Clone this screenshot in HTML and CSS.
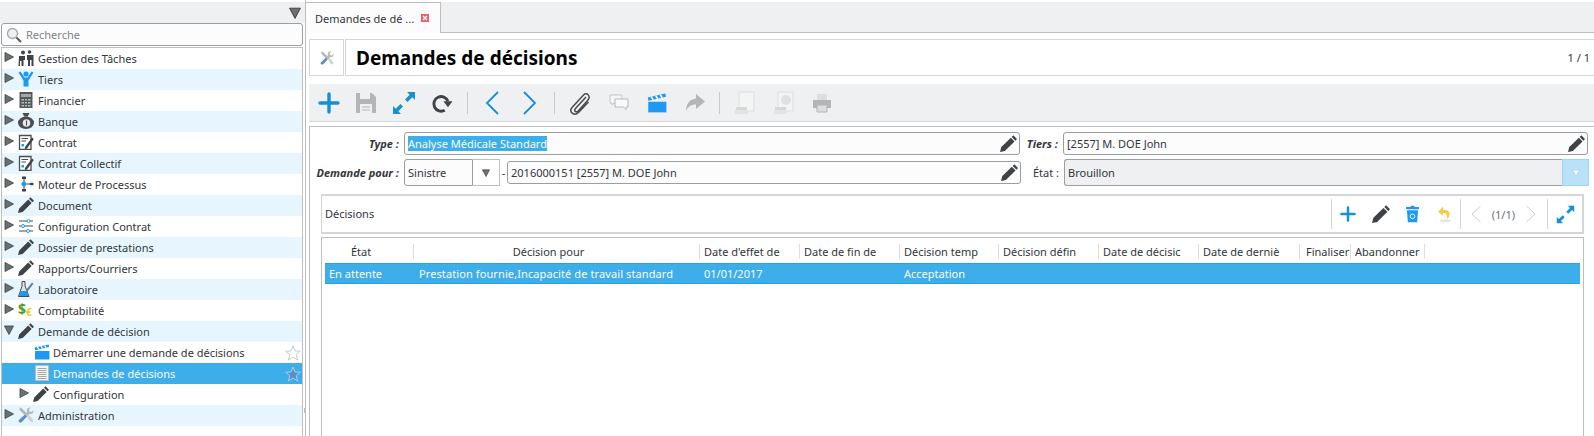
FILE: index.html
```html
<!DOCTYPE html>
<html lang="fr">
<head>
    <meta charset="UTF-8">
    <title>Demandes de décisions</title>
    <link rel="stylesheet" href="styles.css">
</head>
<body>

    <svg class="sprite" width="0" height="0">
        <symbol id="i-right" viewBox="0 0 10 10"><path d="M1 .5 9.500 5 1 9.500z" fill="#6b7073" stroke="#3b4045" stroke-width=".8"/></symbol>
        <symbol id="i-down" viewBox="0 0 10 10"><path d="M.5 1 9.500 1 5 9.500z" fill="#6b7073" stroke="#3b4045" stroke-width=".8"/></symbol>
        <symbol id="i-pencil" viewBox="0 0 16 16"><path d="M12.500 .3 16 3.800 14.500 5.300 11 1.800zM10.200 2.600 13.700 6.100 4.600 15 0 16 1.200 11.400z" fill="#3f4347"/></symbol>
        <symbol id="i-tools" viewBox="0 0 16 16"><path d="M1.500 .5 3.500 1 9 6.500 7 8.500 1.500 3z" fill="#b4b7ba"/><path d="M8.500 8.500 10 7 15 12.500 15 15 12.500 15z" fill="#d0d2d4"/><path d="M7 7.500 9 9.500 3.800 15C2.800 16 1 15.500 .8 14.500 .5 13.500 .8 13 1.500 12.500z" fill="#5b8fc4"/><path d="M15.500 3 13.500 5 11.500 4.500 11 2.500 13 .5C10.500 0 8 2 9 5L7 7.500 9 9.500 11 7C14 8 16 5.500 15.500 3z" fill="#b4bac0"/></symbol>
        <symbol id="i-clapper" viewBox="0 0 16 16"><path d="M1 7H15.500V15.500H1z" fill="#1d99f3"/><path d="M.6 3.600 14.600 .4 15.200 3 1.200 6.200z" fill="#1d99f3"/><path d="M3.400 3 5 5.400M7 2.200 8.600 4.600M10.600 1.400 12.200 3.800" stroke="#fff" stroke-width="1.200"/></symbol>
        <symbol id="i-doc" viewBox="0 0 16 16"><path d="M1.500 .5H14.500V15.500H1.500z" fill="#f4f5f5" stroke="#b8bbbd"/><path d="M3.500 3.500H12.500M3.500 5.500H12.500M3.500 7.500H12.500M3.500 9.500H12.500M3.500 11.500H12.500M3.500 13.500H12.500" stroke="#a5a8aa"/></symbol>
        <symbol id="i-star" viewBox="0 0 16 16"><path d="M8 1 10 6 15.300 6.200 11.200 9.600 12.600 15 8 12 3.400 15 4.800 9.600 .7 6.200 6 6z" fill="none" stroke="#c8cacc"/></symbol>
        <symbol id="i-star-on" viewBox="0 0 16 16"><path d="M8 1 10 6 15.300 6.200 11.200 9.600 12.600 15 8 12 3.400 15 4.800 9.600 .7 6.200 6 6z" fill="#5b8fc4" stroke="#a9d2ee"/></symbol>
        <symbol id="i-plus" viewBox="0 0 22 22"><path d="M11 2V20M2 11H20" stroke="#1590d5" stroke-width="3.400" stroke-linecap="round"/></symbol>
        <symbol id="i-expand" viewBox="0 0 24 24"><path d="M15 1H23V9L20.300 6.300 15.500 11 13 8.500 17.700 3.700zM1 23V15L3.700 17.700 8.500 13 11 15.500 6.300 20.300 9 23z" fill="#1590d5"/></symbol>
        <symbol id="i-contract" viewBox="0 0 16 16"><path d="M1.500 1.500H13V15.500H1.500z" fill="#fff" stroke="#4a4d50" stroke-width="1.300"/><path d="M3.500 4.500H10M3.500 7H8" stroke="#4a4d50"/><path d="M3.500 10H6V12.500H3.500z" fill="#1d99f3"/><path d="M7 13 14 3.500 15.800 5 9 14.500 6.800 15z" fill="#3f4347"/></symbol>
    </svg>

    <div class="sidebar">
        <div class="side-top"><svg class="side-arrow"><use href="#i-down"/></svg></div>
        <div class="search">
            <svg class="search-ico" viewBox="0 0 16 16"><circle cx="6.500" cy="6.500" r="5" fill="#eef1f3" stroke="#a4a8ab" stroke-width="1.300"/><path d="M10.500 10.500 15 15" stroke="#55595c" stroke-width="2"/></svg>
            <span>Recherche</span>
        </div>
        <div class="tree">
            <div class="row">
                <svg class="arrow"><use href="#i-right"/></svg>
                <svg class="ico" viewBox="0 0 16 16"><circle cx="5" cy="2.500" r="2" fill="#3f4347"/><circle cx="11.500" cy="2" r="1.800" fill="#3f4347"/><path d="M1 6H7V10H5.500V16H3.500V11H2V16H.5zM9 5H15.500V16H13.500V10H12V16H10V10H9z" fill="#3f4347"/></svg>
                <span>Gestion des Tâches</span>
            </div>
            <div class="row">
                <svg class="arrow"><use href="#i-right"/></svg>
                <svg class="ico" viewBox="0 0 16 16"><circle cx="8" cy="3" r="2.600" fill="#1d99f3"/><path d="M.5 1.500 2.500 .5 6.500 6.500H9.500L13.500 .5 15.500 1.500 10.500 9.500V15.500H5.500V9.500z" fill="#1d99f3"/></svg>
                <span>Tiers</span>
            </div>
            <div class="row">
                <svg class="arrow"><use href="#i-right"/></svg>
                <svg class="ico" viewBox="0 0 16 16"><path d="M1.500 0H14.500V16H1.500z" fill="#55585b"/><path d="M3 2H13V5H3z" fill="#a5a8aa"/><path d="M3.500 7H6V8.500H3.500zM7 7H9V8.500H7zM10 7H12.500V8.500H10zM3.500 10H6V11.500H3.500zM7 10H9V11.500H7zM10 10H12.500V11.500H10zM3.500 13H6V14.500H3.500zM7 13H9V14.500H7zM10 13H12.500V14.500H10z" fill="#b7b9ba"/></svg>
                <span>Financier</span>
            </div>
            <div class="row">
                <svg class="arrow"><use href="#i-right"/></svg>
                <svg class="ico" viewBox="0 0 16 16"><path d="M4.500 0H11.500L9.800 3.500H6.200z" fill="#4a4d50"/><ellipse cx="8" cy="9.800" rx="8" ry="6.200" fill="#4a4d50"/><circle cx="8.500" cy="10" r="3.800" fill="#e6e7e8"/><path d="M8.500 7.500V12.500" stroke="#4a4d50"/></svg>
                <span>Banque</span>
            </div>
            <div class="row">
                <svg class="arrow"><use href="#i-right"/></svg>
                <svg class="ico"><use href="#i-contract"/></svg>
                <span>Contrat</span>
            </div>
            <div class="row">
                <svg class="arrow"><use href="#i-right"/></svg>
                <svg class="ico"><use href="#i-contract"/></svg>
                <span>Contrat Collectif</span>
            </div>
            <div class="row">
                <svg class="arrow"><use href="#i-right"/></svg>
                <svg class="ico" viewBox="0 0 16 16"><path d="M4 .5H8V3H4zM4 13H8V15.500H4z" fill="#3f4347"/><path d="M6 3V13" stroke="#3f4347"/><path d="M6 4.800 9.200 8 6 11.200 2.800 8z" fill="#1d99f3"/><path d="M9 8H12" stroke="#3f4347"/><path d="M12 6.800H15.500V9.200H12z" fill="#3f4347"/></svg>
                <span>Moteur de Processus</span>
            </div>
            <div class="row">
                <svg class="arrow"><use href="#i-right"/></svg>
                <svg class="ico"><use href="#i-pencil"/></svg>
                <span>Document</span>
            </div>
            <div class="row">
                <svg class="arrow"><use href="#i-right"/></svg>
                <svg class="ico" viewBox="0 0 16 16"><path d="M1 3H15M1 8H15M1 13H15" stroke="#4a4d50"/><circle cx="10.500" cy="3" r="1.500" fill="#fff" stroke="#1d99f3"/><circle cx="5" cy="8" r="1.500" fill="#fff" stroke="#1d99f3"/><circle cx="10" cy="13" r="1.500" fill="#fff" stroke="#1d99f3"/></svg>
                <span>Configuration Contrat</span>
            </div>
            <div class="row">
                <svg class="arrow"><use href="#i-right"/></svg>
                <svg class="ico"><use href="#i-pencil"/></svg>
                <span>Dossier de prestations</span>
            </div>
            <div class="row">
                <svg class="arrow"><use href="#i-right"/></svg>
                <svg class="ico"><use href="#i-pencil"/></svg>
                <span>Rapports/Courriers</span>
            </div>
            <div class="row">
                <svg class="arrow"><use href="#i-right"/></svg>
                <svg class="ico" viewBox="0 0 16 16"><path d="M4 .5H7V5L11 15.500H.5L4 5z" fill="#dfe1e2" stroke="#4a4d50"/><path d="M2.500 10H9L10.500 15H1z" fill="#1d99f3"/><path d="M8 9 14 1.500 15.500 2.800 9.500 10.500z" fill="#6b7d90"/></svg>
                <span>Laboratoire</span>
            </div>
            <div class="row">
                <svg class="arrow"><use href="#i-right"/></svg>
                <span class="ico coins"><b class="dollar">$</b><b class="euro">€</b></span>
                <span>Comptabilité</span>
            </div>
            <div class="row">
                <svg class="arrow"><use href="#i-down"/></svg>
                <svg class="ico"><use href="#i-pencil"/></svg>
                <span>Demande de décision</span>
            </div>
            <div class="row sub">
                <svg class="ico"><use href="#i-clapper"/></svg>
                <span>Démarrer une demande de décisions</span>
                <svg class="star"><use href="#i-star"/></svg>
            </div>
            <div class="row sub">
                <svg class="ico"><use href="#i-doc"/></svg>
                <span>Demandes de décisions</span>
                <svg class="star"><use href="#i-star-on"/></svg>
            </div>
            <div class="row sub-folder">
                <svg class="arrow"><use href="#i-right"/></svg>
                <svg class="ico"><use href="#i-pencil"/></svg>
                <span>Configuration</span>
            </div>
            <div class="row">
                <svg class="arrow"><use href="#i-right"/></svg>
                <svg class="ico"><use href="#i-tools"/></svg>
                <span>Administration</span>
            </div>
        </div>
        <div class="grip"></div>
    </div>

    <div class="main">
        <div class="tabs">
            <div class="tab">
                <span>Demandes de dé ...</span>
                <svg class="tab-close" viewBox="0 0 8 8"><path d="M0 0H8V8H0z" fill="#e0636b"/><path d="M2 2 6 6M6 2 2 6" stroke="#fff" stroke-width="1.300"/></svg>
            </div>
        </div>

        <div class="title-line">
            <div class="title-ico"><svg class="ico"><use href="#i-tools"/></svg></div>
            <div class="title-box">
                <h1>Demandes de décisions</h1>
                <span class="pager">1 / 1</span>
            </div>
        </div>

        <div class="toolbar">
            <div class="tool-group g-main">
                <svg class="tool w22"><use href="#i-plus"/></svg>
                <svg class="tool w22" viewBox="0 0 22 22"><path d="M1 1H17L21 5V21H1z" fill="#b3b6b8"/><path d="M5 1H15V7H5z" fill="#eff0f1"/><path d="M5 12H17V21H5z" fill="#eff0f1"/><path d="M7 15H15M7 18H15" stroke="#b3b6b8"/></svg>
                <svg class="tool w24"><use href="#i-expand"/></svg>
                <svg class="tool w22" viewBox="0 0 24 24"><path d="M15 20A8 8 0 1 1 18.500 10" fill="none" stroke="#3f4347" stroke-width="3.200"/><path d="M13.500 10H23.500L18.500 16.500z" fill="#3f4347"/></svg>
            </div>
            <i class="tool-sep"></i>
            <div class="tool-group g-nav">
                <svg class="tool w14" viewBox="0 0 14 24"><path d="M13 1 2 12 13 23" fill="none" stroke="#1590d5" stroke-width="1.800"/></svg>
                <svg class="tool w14" viewBox="0 0 14 24"><path d="M1 1 12 12 1 23" fill="none" stroke="#1590d5" stroke-width="1.800"/></svg>
            </div>
            <i class="tool-sep"></i>
            <div class="tool-group g-attach">
                <svg class="tool w22" viewBox="0 0 22 24"><path d="M17 6 6.500 17.500C4.500 20 7 22 9.200 20L19 9C22 5.500 18 .5 14.500 4L3 16.500C-.5 21 5 25.500 9.500 21.500L19.500 11" fill="none" stroke="#4a4d50" stroke-width="1.500"/></svg>
                <svg class="tool w20" viewBox="0 0 20 18"><path d="M1 1H13V9H5L3 11V9H1z" fill="#f4f5f5" stroke="#c3c5c7"/><path d="M6 5H19V13H17V15.500L14.500 13H6z" fill="#f9f9fa" stroke="#b4b7b9"/></svg>
                <svg class="tool w20" viewBox="0 0 16 16"><use href="#i-clapper"/></svg>
                <svg class="tool w20" viewBox="0 0 20 18"><path d="M11 0 20 7.500 11 15V10.500C6 10.500 3 12.500 1 17 1 10 5 5 11 4.500z" fill="#b3b6b8"/></svg>
            </div>
            <i class="tool-sep"></i>
            <div class="tool-group g-print">
                <svg class="tool w22" viewBox="0 0 22 24"><path d="M5 1H20V20H5z" fill="#f3f4f4" stroke="#dcdedf"/><path d="M2 16H13V19H2z" fill="#d5d7d8"/><path d="M1 19H14V23H1z" fill="#e2e3e4"/></svg>
                <svg class="tool w22" viewBox="0 0 22 24"><path d="M5 1H20V20H5z" fill="#f3f4f4" stroke="#dcdedf"/><circle cx="13" cy="9" r="5" fill="#e0e1e2"/><path d="M2 16H13V19H2z" fill="#d5d7d8"/><path d="M1 19H14V23H1z" fill="#e2e3e4"/></svg>
                <svg class="tool w20" viewBox="0 0 20 20"><path d="M5 1H15V7H5z" fill="#dcdedf"/><path d="M1 7H19V15H1z" fill="#b3b6b8"/><path d="M5 12H15V19H5z" fill="#dcdedf" stroke="#b3b6b8"/></svg>
            </div>
        </div>

        <div class="form-box">
            <div class="form-line">
                <label class="lbl lbl-left strong">Type :</label>
                <div class="field field-wide"><span class="picked">Analyse Médicale Standard</span><svg class="pen"><use href="#i-pencil"/></svg></div>
                <label class="lbl lbl-right strong">Tiers :</label>
                <div class="field field-end">[2557] M. DOE John<svg class="pen"><use href="#i-pencil"/></svg></div>
            </div>
            <div class="form-line line-two">
                <label class="lbl lbl-left strong">Demande pour :</label>
                <div class="combo">
                    <div class="combo-text">Sinistre</div>
                    <div class="combo-btn"><svg class="combo-arrow"><use href="#i-down"/></svg></div>
                </div>
                <span class="dash">-</span>
                <div class="field field-fill">2016000151 [2557] M. DOE John<svg class="pen"><use href="#i-pencil"/></svg></div>
                <label class="lbl lbl-right">État :</label>
                <div class="state">
                    <div class="state-text">Brouillon</div>
                    <div class="state-btn"><svg class="state-arrow" viewBox="0 0 10 10"><path d="M.5 1 9.500 1 5 9.500z" fill="#eef7fc" stroke="#9ccbe6" stroke-width=".8"/></svg></div>
                </div>
            </div>

            <div class="panel-head">
                <span class="panel-name">Décisions</span>
                <div class="panel-tools">
                    <i class="panel-sep"></i>
                    <div class="panel-group g-acts">
                        <svg class="ptool plus"><use href="#i-plus"/></svg>
                        <svg class="ptool pencil"><use href="#i-pencil"/></svg>
                        <svg class="ptool bin" viewBox="0 0 14 18"><path d="M5 0H9V1.500H14V4H0V1.500H5zM1 5H13L12 18H2z" fill="#1d99f3"/><circle cx="7" cy="11.500" r="2.500" fill="none" stroke="#fff"/></svg>
                        <svg class="ptool undo" viewBox="0 0 14 18"><ellipse cx="8" cy="16.500" rx="6" ry="1.500" fill="#e3e4e5"/><path d="M5.500 1 0 6.500 5.500 11V8C8.500 8 10 9.500 10 15 14 10 13.500 4.500 5.500 4.500z" fill="#f0cf45"/></svg>
                    </div>
                    <i class="panel-sep"></i>
                    <div class="panel-group g-pages">
                        <svg class="ptool nav" viewBox="0 0 10 18"><path d="M9.500 1 1 9 9.500 17" fill="none" stroke="#c9cbcd"/></svg>
                        <span class="pcount">(1/1)</span>
                        <svg class="ptool nav" viewBox="0 0 10 18"><path d="M.5 1 9 9 .5 17" fill="none" stroke="#c9cbcd"/></svg>
                    </div>
                    <i class="panel-sep"></i>
                    <svg class="ptool exp"><use href="#i-expand"/></svg>
                </div>
            </div>

            <div class="table-box">
                <div class="t-head">
                    <div class="c c1 mid">État</div>
                    <div class="c c2 mid">Décision pour</div>
                    <div class="c c3">Date d'effet de</div>
                    <div class="c c4">Date de fin de</div>
                    <div class="c c5">Décision temp</div>
                    <div class="c c6">Décision défin</div>
                    <div class="c c7">Date de décisic</div>
                    <div class="c c8">Date de derniè</div>
                    <div class="c c9">Finaliser</div>
                    <div class="c c10">Abandonner</div>
                </div>
                <div class="t-row">
                    <div class="c c1">En attente</div>
                    <div class="c c2">Prestation fournie,Incapacité de travail standard</div>
                    <div class="c c3">01/01/2017</div>
                    <div class="c c4"></div>
                    <div class="c c5">Acceptation</div>
                </div>
            </div>
        </div>
    </div>

</body>
</html>
```

FILE: styles.css
```css
* {
    box-sizing: border-box;
}

body {
    margin: 0;
    width: 1594px;
    height: 436px;
    overflow: hidden;
    display: flex;
    background: #fff;
    color: #31363b;
    font-family: "Noto Sans", sans-serif;
    font-size: 11px;
}

.sprite {
    display: none;
}

/* left menu */
.sidebar {
    position: relative;
    width: 305px;
    flex: none;
    padding: 2px 1px 0 1px;
    display: flex;
    flex-direction: column;
}

.side-top {
    height: 21px;
    margin: 0 -1px;
    background: #eff0f1;
    display: flex;
    justify-content: flex-end;
    align-items: center;
    padding-right: 4px;
}

.side-arrow {
    width: 12px;
    height: 12px;
}

.search {
    height: 23px;
    flex: none;
    border: 1px solid #9a9ea1;
    border-radius: 3px;
    background: #fcfcfc;
    display: flex;
    align-items: center;
    gap: 4px;
    padding-left: 4px;
    color: #7f8487;
    margin-right: 1px;
}

.search-ico {
    width: 16px;
    height: 16px;
}

.tree {
    flex: 1;
    margin-top: 1px;
    margin-right: 1px;
    border: 1px solid #bcbebf;
    border-bottom: none;
}

.grip {
    position: absolute;
    right: 0;
    top: 408px;
    width: 1px;
    height: 5px;
    background: #bcbebf;
}

.row {
    height: 21px;
    display: flex;
    align-items: center;
    padding-left: 2px;
}

.row:nth-child(even) {
    background: #e7f6fe;
}

.row:nth-child(16) {
    background: #3daee9;
    color: #fcfcfc;
}

.row.sub {
    padding-left: 32px;
}

.row.sub .ico {
    margin-right: 3px;
}

.row.sub-folder {
    padding-left: 17px;
}

.arrow {
    width: 10px;
    height: 10px;
    margin-right: 4px;
    margin-top: -3px;
    flex: none;
}

.ico {
    width: 16px;
    height: 16px;
    margin-right: 4px;
    margin-top: -2px;
    flex: none;
}

.coins {
    display: flex;
    align-items: flex-start;
    line-height: 1;
}

.dollar {
    font-size: 14px;
    color: #4a9e1c;
}

.euro {
    font-size: 10px;
    margin-top: 5px;
    color: #e8c92c;
}

.star {
    width: 16px;
    height: 16px;
    margin-left: auto;
    margin-right: 1px;
}

/* right side */
.main {
    flex: 1;
    min-width: 0;
    padding-top: 2px;
    border-left: 1px solid #bcbebf;
    display: flex;
    flex-direction: column;
}

.tabs {
    height: 31px;
    flex: none;
    background: #eff0f1;
    border-bottom: 1px solid #bcbebf;
    display: flex;
}

.tab {
    width: 136px;
    height: 31px;
    margin-left: -1px;
    background: #fcfcfc;
    border: 1px solid #bcbebf;
    border-bottom: none;
    display: flex;
    align-items: center;
    padding-left: 9px;
    gap: 7px;
}

.tab-close {
    width: 8px;
    height: 8px;
}

.title-line {
    display: flex;
    height: 37px;
    margin: 6px 0 0 3px;
    gap: 1px;
    flex: none;
}

.title-ico {
    width: 35px;
    border: 1px solid #d4d6d7;
    display: flex;
    align-items: center;
    justify-content: center;
}

.title-ico .ico {
    margin: 0;
    width: 14px;
    height: 14px;
}

.title-box {
    flex: 1;
    border: 1px solid #d4d6d7;
    border-right: none;
    display: flex;
    align-items: center;
    justify-content: space-between;
    padding: 0 4px 0 10px;
}

h1 {
    margin: 0;
    font-size: 19px;
    color: #000;
}

.toolbar {
    height: 38px;
    margin: 8px 0 0 3px;
    flex: none;
    background: #eff0f1;
    border-bottom: 1px solid #d4d6d7;
    display: flex;
    align-items: center;
    padding-left: 9px;
}

.tool-group {
    display: flex;
    align-items: center;
}

.g-main {
    gap: 15px;
}

.g-nav {
    gap: 24px;
    margin: 0 3px;
}

.g-attach {
    gap: 18px;
}

.g-print {
    gap: 17px;
}

.tool {
    flex: none;
    height: 24px;
}

.w14 {
    width: 14px;
}

.w20 {
    width: 20px;
    height: 20px;
}

.w22 {
    width: 22px;
}

.w24 {
    width: 24px;
}

.tool-sep {
    width: 1px;
    height: 22px;
    margin: 0 14px;
    background: #c8cacc;
    flex: none;
}

.form-box {
    flex: 1;
    margin: 4px 0 0 3px;
    border: 1px solid #bcbebf;
    border-right: none;
    border-bottom: none;
}

.form-line {
    display: flex;
    align-items: center;
    margin-top: 5px;
    height: 23px;
}

.form-line.line-two {
    margin-top: 4px;
    height: 27px;
}

.lbl {
    flex: none;
    text-align: right;
}

.strong {
    font-weight: bold;
    font-style: italic;
}

.lbl-left {
    width: 89px;
    margin-right: 5px;
}

.lbl-right {
    width: 38px;
    margin-right: 5px;
}

.field {
    height: 23px;
    border: 1px solid #9a9ea1;
    border-radius: 3px;
    background: #fcfcfc;
    display: flex;
    align-items: center;
    justify-content: space-between;
    padding: 0 2px 0 3px;
    flex: none;
}

.field-wide {
    width: 616px;
}

.field-fill {
    width: 514px;
}

.field-end {
    width: 525px;
}

.picked {
    background: #3daee9;
    color: #fcfcfc;
}

.pen {
    width: 17px;
    height: 17px;
}

.combo {
    display: flex;
    height: 27px;
    flex: none;
}

.combo-text {
    width: 69px;
    border: 1px solid #9a9ea1;
    border-radius: 3px 0 0 3px;
    background: #fcfcfc;
    display: flex;
    align-items: center;
    padding-left: 3px;
}

.combo-btn {
    width: 27px;
    border: 1px solid #bcbebf;
    border-left: none;
    display: flex;
    align-items: center;
    justify-content: center;
}

.combo-arrow {
    width: 8px;
    height: 8px;
}

.dash {
    width: 7px;
    text-align: center;
    flex: none;
}

.state {
    display: flex;
    height: 27px;
    width: 525px;
    flex: none;
}

.state-text {
    flex: 1;
    background: #eff0f1;
    border: 1px solid #9a9ea1;
    border-right: none;
    border-radius: 3px 0 0 3px;
    display: flex;
    align-items: center;
    padding-left: 3px;
}

.state-btn {
    width: 27px;
    background: #b9e2f8;
    border: 1px solid #9fd5f2;
    display: flex;
    align-items: center;
    justify-content: center;
}

.state-arrow {
    width: 8px;
    height: 8px;
}

.panel-head {
    height: 40px;
    margin: 8px 10px 0 11px;
    border: 2px solid #d4d6d7;
    border-left-width: 1px;
    display: flex;
    align-items: center;
    justify-content: space-between;
    padding-left: 3px;
}

.panel-name {
    margin-bottom: 2px;
}

.panel-tools {
    display: flex;
    align-items: center;
    padding-right: 7px;
}

.panel-group {
    display: flex;
    align-items: center;
}

.g-acts {
    gap: 16px;
}

.g-pages {
    gap: 11px;
    margin: 0 2px;
}

.panel-sep {
    width: 1px;
    height: 30px;
    margin: 0 8px 0 9px;
    background: #d4d6d7;
    flex: none;
}

.ptool {
    flex: none;
    width: 16px;
    height: 18px;
}

.pencil {
    width: 18px;
}

.bin {
    width: 13px;
}

.undo {
    width: 13px;
    margin-left: 3px;
}

.nav {
    width: 10px;
}

.exp {
    width: 19px;
    height: 19px;
}

.pcount {
    color: #6b7073;
}

.table-box {
    height: 220px;
    margin: 3px 10px 0 11px;
    border: 1px solid #bcbebf;
    padding: 2px 3px 0 3px;
}

.t-head {
    display: flex;
    height: 23px;
    align-items: center;
}

.t-head .c {
    height: 15px;
    line-height: 15px;
    border-right: 1px solid #dcdedf;
}

.t-row {
    display: flex;
    align-items: center;
    height: 21px;
    background: #3daee9;
    color: #fcfcfc;
    border-top: 1px solid #2f9fdc;
    border-bottom: 1px solid #2f9fdc;
}

.t-row .c2 {
    letter-spacing: .1px;
    padding-left: 5px;
}

.c {
    flex: none;
    padding-left: 4px;
    white-space: nowrap;
}

.t-head .mid {
    text-align: center;
    padding: 0 16px 0 0;
}

.t-head .c9 {
    padding-left: 6px;
}

.c1 { width: 89px; }
.c2 { width: 286px; }
.c3 { width: 100px; }
.c4 { width: 100px; }
.c5 { width: 99px; }
.c6 { width: 100px; }
.c7 { width: 100px; }
.c8 { width: 101px; }
.c9 { width: 51px; }
.c10 { width: 74px; }
```
